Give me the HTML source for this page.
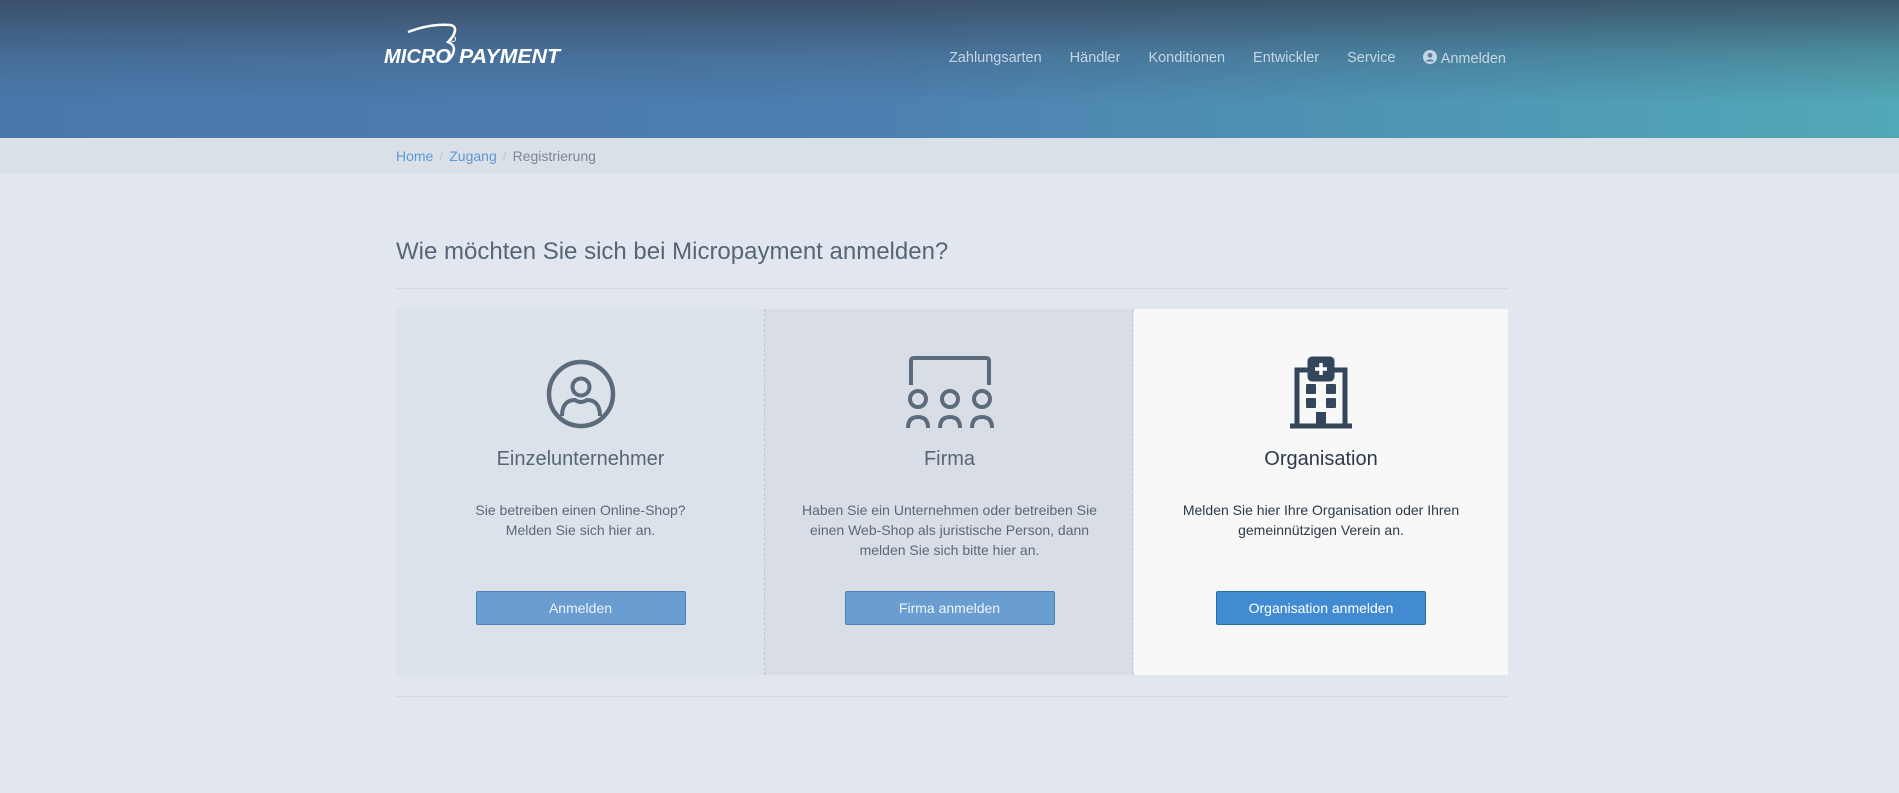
<!DOCTYPE html>
<html><head><meta charset="utf-8"><style>
*{box-sizing:border-box;margin:0;padding:0}
body{width:1899px;height:793px;overflow:hidden;background:#e2e7ef;font-family:"Liberation Sans",Arial,sans-serif;color:#5a6978;position:relative}
.hdr{position:absolute;left:0;top:0;width:1899px;height:138px;background:linear-gradient(180deg,rgba(55,70,90,.8) 0%,rgba(60,80,105,.3) 40%,rgba(0,0,0,0) 75%),linear-gradient(90deg,#4a78ab 0%,#4d7fb0 45%,#4f9ab5 80%,#52a8b6 100%)}
.logo{position:absolute;left:384px;top:20px}
.nav{position:absolute;top:50px;right:393px;font-size:14.5px;color:#c8d6e4;display:flex;gap:28px}
.bc{position:absolute;top:138px;left:0;width:1899px;height:36px;background:#dae0e8;font-size:14px}
.bc div{position:absolute;left:396px;top:10px;color:#7d8793}
.bc a{color:#5f98d2;text-decoration:none}
.bc s{text-decoration:none;color:#c0c7cf;margin:0 6px}
h1{position:absolute;left:396px;top:238px;font-size:24px;font-weight:normal;color:#566676}
.hr{position:absolute;left:396px;width:1112px;height:1px;background:#d2d9e2}
.p{position:absolute;top:309px;height:366px;text-align:center}
.t{position:absolute;top:500px;width:100%;font-size:14px;line-height:20px}
.b{position:absolute;top:591px;left:50%;margin-left:-105px;width:210px;height:34px;border:1px solid #4a7fb8;background:#6a9dd0;color:#eef4fb;font-size:14px;line-height:32px;border-radius:2px}
</style></head><body>
<div class="hdr">
<div class="logo"><svg width="180" height="46" viewBox="0 0 180 46">
<path d="M24 12 C40 6 55 4 66 5 C74 6 72 14 64 22 C74 26 70 36 62 42" fill="none" stroke="#fff" stroke-width="2.5"/>
<circle cx="69" cy="19" r="2.5" fill="none" stroke="#fff" stroke-width="1"/>
<text x="0" y="43" font-family="Liberation Sans" font-style="italic" font-weight="bold" font-size="20" fill="#fff" textLength="67" lengthAdjust="spacingAndGlyphs">MICRO</text>
<text x="75" y="43" font-family="Liberation Sans" font-style="italic" font-weight="bold" font-size="20" fill="#fff" textLength="101" lengthAdjust="spacingAndGlyphs">PAYMENT</text>
</svg></div>
<div class="nav"><span>Zahlungsarten</span><span>Händler</span><span>Konditionen</span><span>Entwickler</span><span>Service</span><span><svg width="14" height="14" viewBox="0 0 14 14" style="vertical-align:-1px"><circle cx="7" cy="7" r="7" fill="#c8d6e4"/><circle cx="7" cy="5.3" r="2.4" fill="#4f85ad"/><path d="M2.8 11.5 C4 8.6 10 8.6 11.2 11.5" fill="#4f85ad"/></svg> Anmelden</span></div>
</div>
<div class="bc"><div><a>Home</a><s>/</s><a>Zugang</a><s>/</s>Registrierung</div></div>
<h1>Wie möchten Sie sich bei Micropayment anmelden?</h1>
<div class="hr" style="top:288px"></div>
<div class="p" style="left:396px;width:369px;background:#dce2ea;border-right:1px dashed #bfc6d0"></div>
<div class="p" style="left:765px;width:368px;background:#d9dee6;border-right:1px dashed #c3cad4"></div>
<div class="p" style="left:1134px;width:374px;background:#f8f8f8"></div>
<div style="position:absolute;left:396px;top:0;width:369px">
<svg style="position:absolute;left:149px;top:358px" width="72" height="72" viewBox="0 0 72 72"><circle cx="36" cy="36" r="32" fill="none" stroke="#5c6b7b" stroke-width="4.5"/><circle cx="36" cy="29" r="8.5" fill="none" stroke="#5c6b7b" stroke-width="4"/><path d="M17 58 C17 44 25 42 30 42 Q36 46 42 42 C47 42 55 44 55 58" fill="none" stroke="#5c6b7b" stroke-width="4"/></svg>
<div style="position:absolute;top:448px;width:100%;text-align:center;font-size:20px;color:#566676">Einzelunternehmer</div>
<div class="t" style="text-align:center">Sie betreiben einen Online-Shop?<br>Melden Sie sich hier an.</div>
<div class="b" style="text-align:center">Anmelden</div>
</div>
<div style="position:absolute;left:765px;top:0;width:369px">
<svg style="position:absolute;left:140px;top:355px" width="90" height="76" viewBox="0 0 90 76"><path d="M6 30 V6 Q6 3 9 3 H81 Q84 3 84 6 V30" fill="none" stroke="#5c6b7b" stroke-width="4"/><g fill="none" stroke="#5c6b7b" stroke-width="4"><circle cx="13" cy="44" r="8"/><circle cx="45" cy="44" r="8"/><circle cx="77" cy="44" r="8"/><path d="M3 73 Q3 62 13 62 Q23 62 23 73"/><path d="M35 73 Q35 62 45 62 Q55 62 55 73"/><path d="M67 73 Q67 62 77 62 Q87 62 87 73"/></g></svg>
<div style="position:absolute;top:448px;width:100%;text-align:center;font-size:20px;color:#566676">Firma</div>
<div class="t" style="text-align:center">Haben Sie ein Unternehmen oder betreiben Sie<br>einen Web-Shop als juristische Person, dann<br>melden Sie sich bitte hier an.</div>
<div class="b" style="text-align:center">Firma anmelden</div>
</div>
<div style="position:absolute;left:1134px;top:0;width:374px">
<svg style="position:absolute;left:155px;top:356px" width="64" height="74" viewBox="0 0 64 74"><g fill="none" stroke="#34465a" stroke-width="5"><path d="M8 70 V14 H22 M42 14 H56 V70"/><rect x="21" y="3" width="22" height="20" rx="2" fill="#34465a"/><path d="M1 70 H63"/></g><path d="M32 7 V19 M26 13 H38" stroke="#fff" stroke-width="3.5"/><g fill="#34465a"><rect x="17" y="28" width="10" height="10" rx="1"/><rect x="37" y="28" width="10" height="10" rx="1"/><rect x="17" y="42" width="10" height="10" rx="1"/><rect x="37" y="42" width="10" height="10" rx="1"/><rect x="27" y="56" width="10" height="14"/></g></svg>
<div style="position:absolute;top:448px;width:100%;text-align:center;font-size:20px;color:#2c3a48">Organisation</div>
<div class="t" style="text-align:center;color:#2c3a48">Melden Sie hier Ihre Organisation oder Ihren<br>gemeinnützigen Verein an.</div>
<div class="b" style="text-align:center;background:#428bd2;border-color:#2d6aa8;color:#fff">Organisation anmelden</div>
</div>
<div class="hr" style="top:696px"></div>
</body></html>
